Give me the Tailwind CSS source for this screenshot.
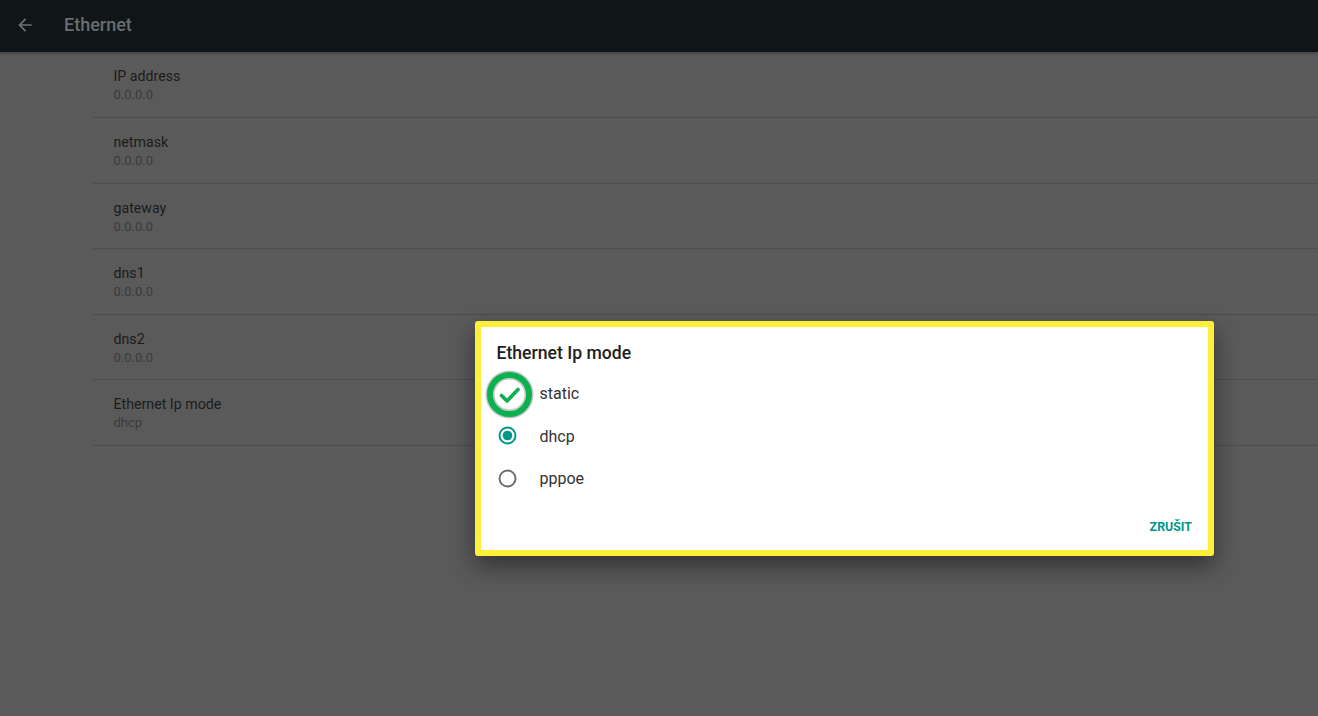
<!DOCTYPE html>
<html lang="cs">
<head>
    <meta charset="UTF-8">
    <meta name="viewport" content="width=device-width, initial-scale=1.0">
    <title>Ethernet</title>
    <script src="https://cdn.jsdelivr.net/npm/@tailwindcss/browser@4"></script>
</head>
<body class="relative h-[716px] w-[1318px] overflow-hidden bg-[#5a5a5a] font-['Roboto',sans-serif]">
    <!-- Toolbar -->
    <header class="flex h-[52px] items-center bg-[#101518] pb-[3px] shadow-[0_1px_3px_rgba(0,0,0,0.35)]">
        <svg class="ml-[15px] h-[20px] w-[20px]" viewBox="0 0 24 24" fill="#6d7072"><path d="M20 11H7.83l5.59-5.59L12 4l-8 8 8 8 1.41-1.41L7.83 13H20v-2z"/></svg>
        <span class="ml-[29px] text-[18px] font-medium leading-none text-[#6a6d6f]">Ethernet</span>
    </header>

    <!-- Settings list -->
    <main class="ml-[93px]">
        <div class="h-[66px] border-b border-[#4e4e4e] pl-[20.5px] pt-[15px]">
            <p class="text-[14.2px] leading-[19px] text-[#1c1c1c]">IP address</p>
            <p class="text-[13px] leading-[18px] text-[#3c3c3c]">0.0.0.0</p>
        </div>
        <div class="h-[65.6px] border-b border-[#4e4e4e] pl-[20.5px] pt-[15px]">
            <p class="text-[14.2px] leading-[19px] text-[#1c1c1c]">netmask</p>
            <p class="text-[13px] leading-[18px] text-[#3c3c3c]">0.0.0.0</p>
        </div>
        <div class="h-[65.6px] border-b border-[#4e4e4e] pl-[20.5px] pt-[15px]">
            <p class="text-[14.2px] leading-[19px] text-[#1c1c1c]">gateway</p>
            <p class="text-[13px] leading-[18px] text-[#3c3c3c]">0.0.0.0</p>
        </div>
        <div class="h-[65.6px] border-b border-[#4e4e4e] pl-[20.5px] pt-[15px]">
            <p class="text-[14.2px] leading-[19px] text-[#1c1c1c]">dns1</p>
            <p class="text-[13px] leading-[18px] text-[#3c3c3c]">0.0.0.0</p>
        </div>
        <div class="h-[65.6px] border-b border-[#4e4e4e] pl-[20.5px] pt-[15px]">
            <p class="text-[14.2px] leading-[19px] text-[#1c1c1c]">dns2</p>
            <p class="text-[13px] leading-[18px] text-[#3c3c3c]">0.0.0.0</p>
        </div>
        <div class="h-[65.6px] border-b border-[#4e4e4e] pl-[20.5px] pt-[15px]">
            <p class="text-[14.2px] leading-[19px] text-[#1c1c1c]">Ethernet Ip mode</p>
            <p class="text-[13px] leading-[18px] text-[#3c3c3c]">dhcp</p>
        </div>
    </main>

    <!-- Dialog -->
    <div class="absolute left-[475px] top-[321px] flex h-[235px] w-[738.5px] flex-col rounded-[3px] border-[6.5px] border-[#ffef3a] bg-white shadow-[0_10px_24px_rgba(0,0,0,0.45)]">
        <h2 class="pl-[15.5px] pt-[15.5px] text-[17.6px] font-medium leading-[20px] text-[#212121]">Ethernet Ip mode</h2>
        <div class="mt-[9.5px] flex h-[42.5px] items-center pl-[16.5px]">
            <span class="h-[19px] w-[19px]"></span>
            <span class="ml-[23px] mt-[2px] text-[16px] text-[#333333]">static</span>
        </div>
        <div class="flex h-[42.5px] items-center pl-[16.5px]">
            <svg class="h-[19px] w-[19px]" viewBox="0 0 19 19"><circle cx="9.5" cy="9.5" r="8" fill="none" stroke="#009688" stroke-width="2"/><circle cx="9.5" cy="9.5" r="4.8" fill="#009688"/></svg>
            <span class="ml-[23px] mt-[2px] text-[16px] text-[#333333]">dhcp</span>
        </div>
        <div class="flex h-[42.5px] items-center pl-[16.5px]">
            <svg class="h-[19px] w-[19px]" viewBox="0 0 19 19"><circle cx="9.5" cy="9.5" r="8" fill="none" stroke="#6e6e6e" stroke-width="2"/></svg>
            <span class="ml-[23px] mt-[2px] text-[16px] text-[#333333]">pppoe</span>
        </div>
        <div class="mt-auto flex justify-end pb-[15px] pr-[15.5px]">
            <span class="text-[12.4px] font-bold leading-[16px] text-[#009688]">ZRUŠIT</span>
        </div>
    </div>

    <!-- Green check annotation over the first radio -->
    <div class="absolute left-[487px] top-[372px] flex h-[45px] w-[45px] items-center justify-center rounded-full border-[6px] border-[#0bb14f] bg-white shadow-[0_0_0_1.5px_#c4c4c4,inset_0_0_0_1.5px_#c4c4c4]">
        <svg class="h-[26px] w-[26px] shrink-0" viewBox="0 0 26 26" fill="none" stroke="#0bb14f" stroke-width="3.6" stroke-linecap="round" stroke-linejoin="round"><path d="M4.5 13.5l5.5 5.5L21 7.5"/></svg>
    </div>
</body>
</html>
